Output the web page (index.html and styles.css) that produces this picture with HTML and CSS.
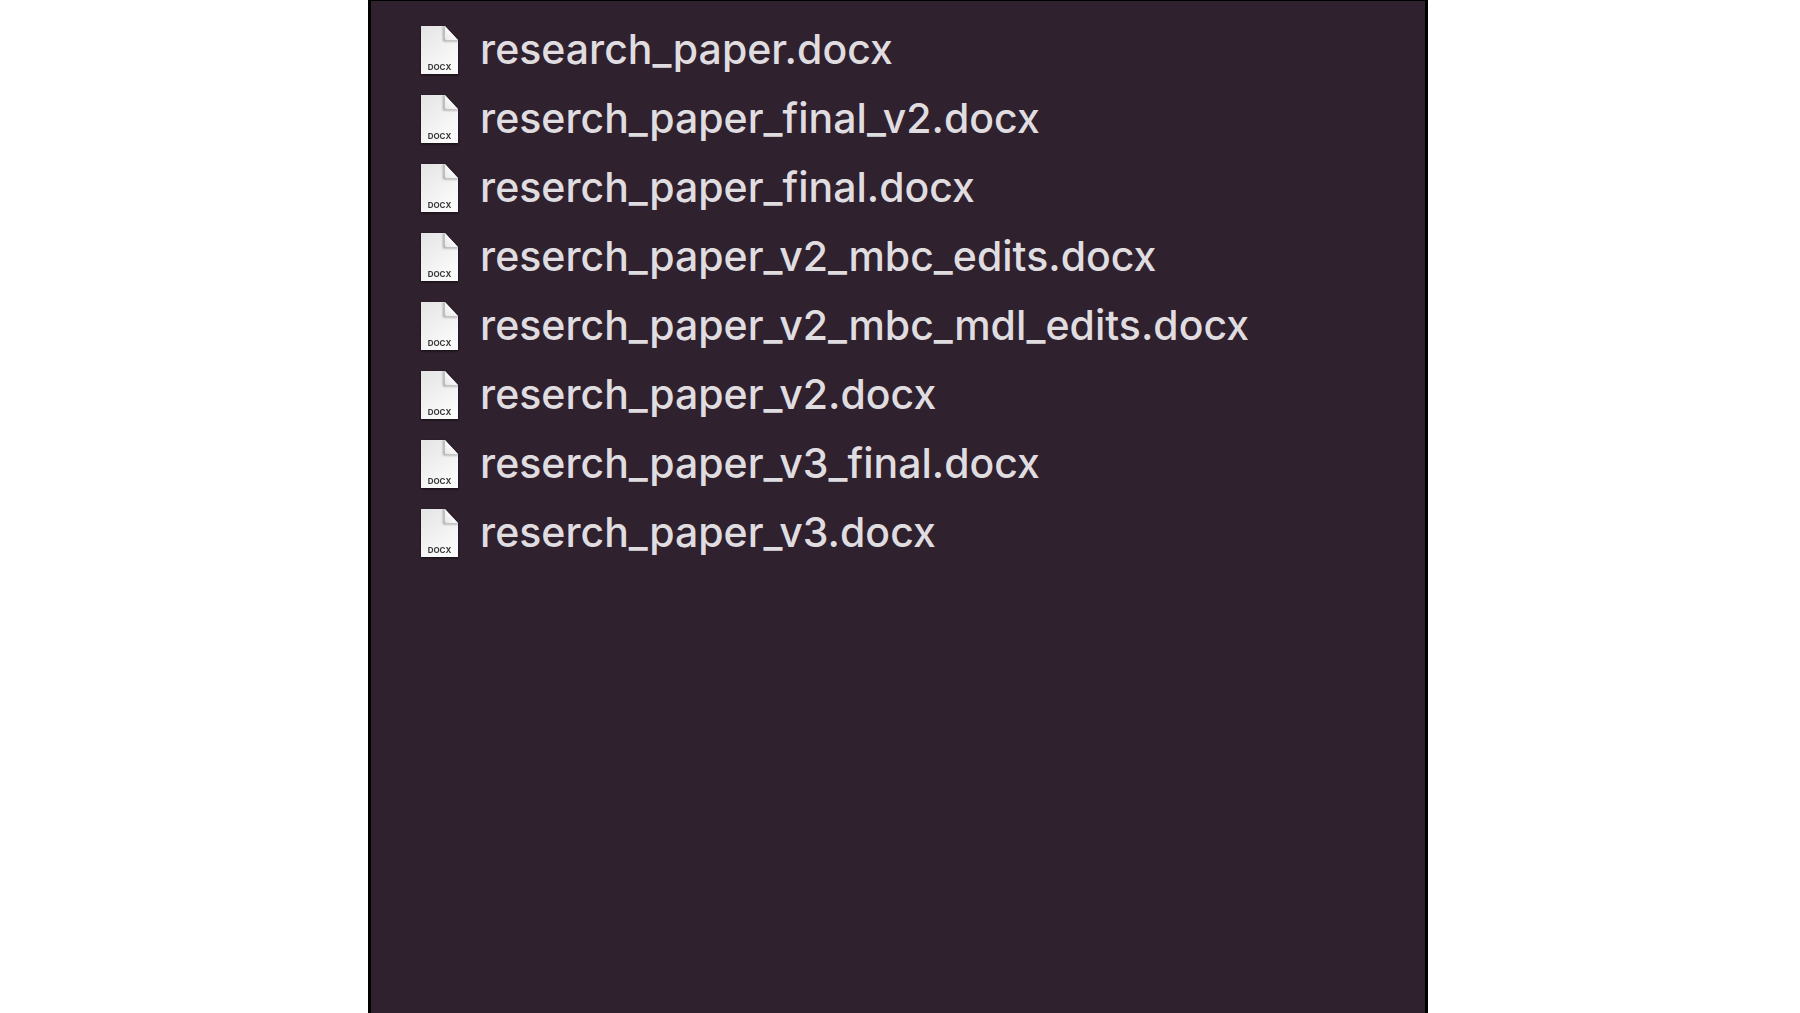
FILE: index.html
```html
<!DOCTYPE html>
<html lang="en">
<head>
<meta charset="utf-8">
<title>Files</title>
<link rel="stylesheet" href="styles.css">
</head>
<body>
<svg class="defs" aria-hidden="true">
  <defs>
    <linearGradient id="page" x1="0" y1="0" x2="0.6" y2="1">
      <stop offset="0" stop-color="#e4e4e4"/>
      <stop offset="1" stop-color="#fbfbfb"/>
    </linearGradient>
    <linearGradient id="fold" x1="1" y1="0" x2="0" y2="1">
      <stop offset="0.4" stop-color="#ffffff"/>
      <stop offset="1" stop-color="#e6e6e6"/>
    </linearGradient>
    <filter id="soft" x="-50%" y="-50%" width="200%" height="200%">
      <feGaussianBlur stdDeviation="0.8"/>
    </filter>
    <clipPath id="sheet"><path d="M0 0H24L37 14V48H0Z"/></clipPath>
    <symbol id="docx" viewBox="0 0 37 48">
      <path d="M0 0H24L37 14V48H0Z" fill="url(#page)"/>
      <g clip-path="url(#sheet)">
        <path d="M23 0V14.500H37" fill="none" stroke="#8c8c8c" stroke-width="1.6" filter="url(#soft)"/>
        <path d="M24 0L37 14H25.500Q24 14 24 12.500Z" fill="url(#fold)"/>
      </g>
      <text x="18.500" y="44" class="icon-label">DOCX</text>
    </symbol>
  </defs>
</svg>
<main class="panel">
  <ul class="files">
    <li class="file"><svg class="icon" aria-hidden="true"><use href="#docx"/></svg><span>research_paper.docx</span></li>
    <li class="file"><svg class="icon" aria-hidden="true"><use href="#docx"/></svg><span>reserch_paper_final_v2.docx</span></li>
    <li class="file"><svg class="icon" aria-hidden="true"><use href="#docx"/></svg><span>reserch_paper_final.docx</span></li>
    <li class="file"><svg class="icon" aria-hidden="true"><use href="#docx"/></svg><span>reserch_paper_v2_mbc_edits.docx</span></li>
    <li class="file"><svg class="icon" aria-hidden="true"><use href="#docx"/></svg><span>reserch_paper_v2_mbc_mdl_edits.docx</span></li>
    <li class="file"><svg class="icon" aria-hidden="true"><use href="#docx"/></svg><span>reserch_paper_v2.docx</span></li>
    <li class="file"><svg class="icon" aria-hidden="true"><use href="#docx"/></svg><span>reserch_paper_v3_final.docx</span></li>
    <li class="file"><svg class="icon" aria-hidden="true"><use href="#docx"/></svg><span>reserch_paper_v3.docx</span></li>
  </ul>
</main>
</body>
</html>
```
FILE: styles.css
```css
* {
  box-sizing: border-box;
}

body {
  margin: 0;
  background: #ffffff;
  font-family: Inter, "Liberation Sans", sans-serif;
}

.defs {
  position: absolute;
  width: 0;
  height: 0;
}

.panel {
  width: 58.9%;
  min-width: 900px;
  min-height: 100vh;
  margin-left: 20.45%;
  padding: 14px 50px;
  border: solid #000000;
  border-width: 1px 3px 0;
  background: #2f212e;
}

.files {
  margin: 0;
  padding: 0;
  list-style: none;
}

.file {
  display: flex;
  align-items: center;
  gap: 22px;
  height: 69px;
  color: #e0dde0;
  font-size: 41px;
  font-weight: 500;
  line-height: 69px;
  white-space: nowrap;
}

.icon {
  flex: none;
  width: 37px;
  height: 48px;
  filter: drop-shadow(0 1px 1px rgba(0, 0, 0, 0.6));
}

.icon-label {
  fill: #383838;
  font-size: 8px;
  font-weight: 700;
  text-anchor: middle;
}
```
